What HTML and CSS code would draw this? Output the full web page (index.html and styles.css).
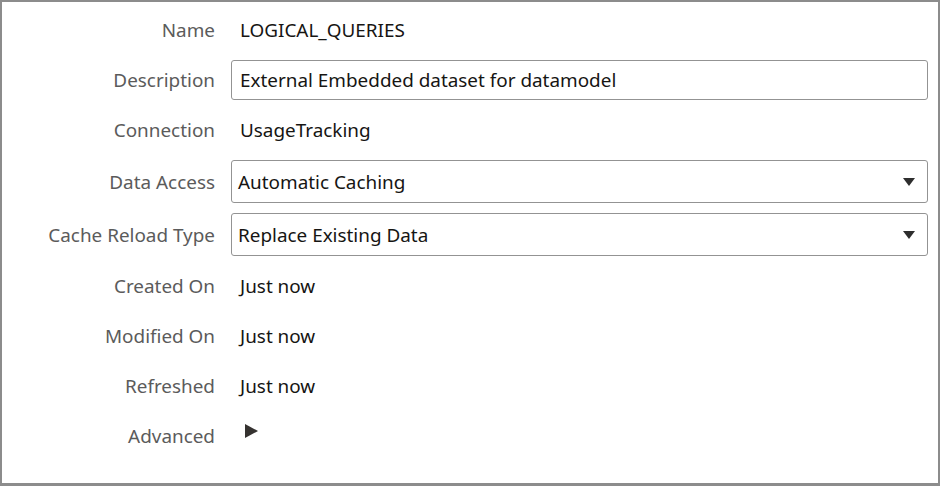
FILE: index.html
```html
<!DOCTYPE html>
<html>
<head>
<meta charset="utf-8">
<link rel="stylesheet" href="styles.css">
</head>
<body>
<div class="panel">
  <div class="form">
    <div class="label">Name</div>
    <div class="value text">LOGICAL_QUERIES</div>

    <div class="label">Description</div>
    <div class="value"><div class="input">External Embedded dataset for datamodel</div></div>

    <div class="label">Connection</div>
    <div class="value text">UsageTracking</div>

    <div class="label tall">Data Access</div>
    <div class="value tall"><div class="select"><span>Automatic Caching</span><span class="caret"></span></div></div>

    <div class="label tall">Cache Reload Type</div>
    <div class="value tall"><div class="select"><span>Replace Existing Data</span><span class="caret"></span></div></div>

    <div class="label">Created On</div>
    <div class="value text">Just now</div>

    <div class="label">Modified On</div>
    <div class="value text">Just now</div>

    <div class="label">Refreshed</div>
    <div class="value text">Just now</div>

    <div class="label">Advanced</div>
    <div class="value"><span class="expander"></span></div>
  </div>
</div>
</body>
</html>
```
FILE: styles.css
```css
html, body {
  margin: 0;
  padding: 0;
  background: #fff;
}
body {
  font-family: "Noto Sans", "Open Sans", sans-serif;
  font-size: 18.9px;
  color: #161513;
}
.panel {
  box-sizing: border-box;
  width: 940px;
  height: 486px;
  border: 2px solid #8c8c8c;
  border-bottom-width: 3px;
  padding: 3px 10px 0 0;
}
.form {
  display: grid;
  grid-template-columns: 213px 1fr;
  column-gap: 16px;
  grid-auto-rows: auto;
}
.label, .value {
  height: 50px;
  display: flex;
  align-items: center;
}
.label.tall, .value.tall {
  height: 53px;
}
.label {
  justify-content: flex-end;
  color: #5b5b5b;
}
.value.text {
  padding-left: 9px;
}
.input, .select {
  box-sizing: border-box;
  width: 100%;
  border: 1px solid #939393;
  border-radius: 3px;
  display: flex;
  align-items: center;
}
.input {
  height: 40px;
  padding-left: 8px;
}
.select {
  height: 43px;
  padding: 0 12px 0 6px;
  justify-content: space-between;
}
.caret {
  width: 0;
  height: 0;
  border-left: 6px solid transparent;
  border-right: 6px solid transparent;
  border-top: 8px solid #2e2e2e;
}
.expander {
  margin-left: 14px;
  margin-top: -11px;
  width: 0;
  height: 0;
  border-top: 7.5px solid transparent;
  border-bottom: 7.5px solid transparent;
  border-left: 13px solid #353230;
}
```
